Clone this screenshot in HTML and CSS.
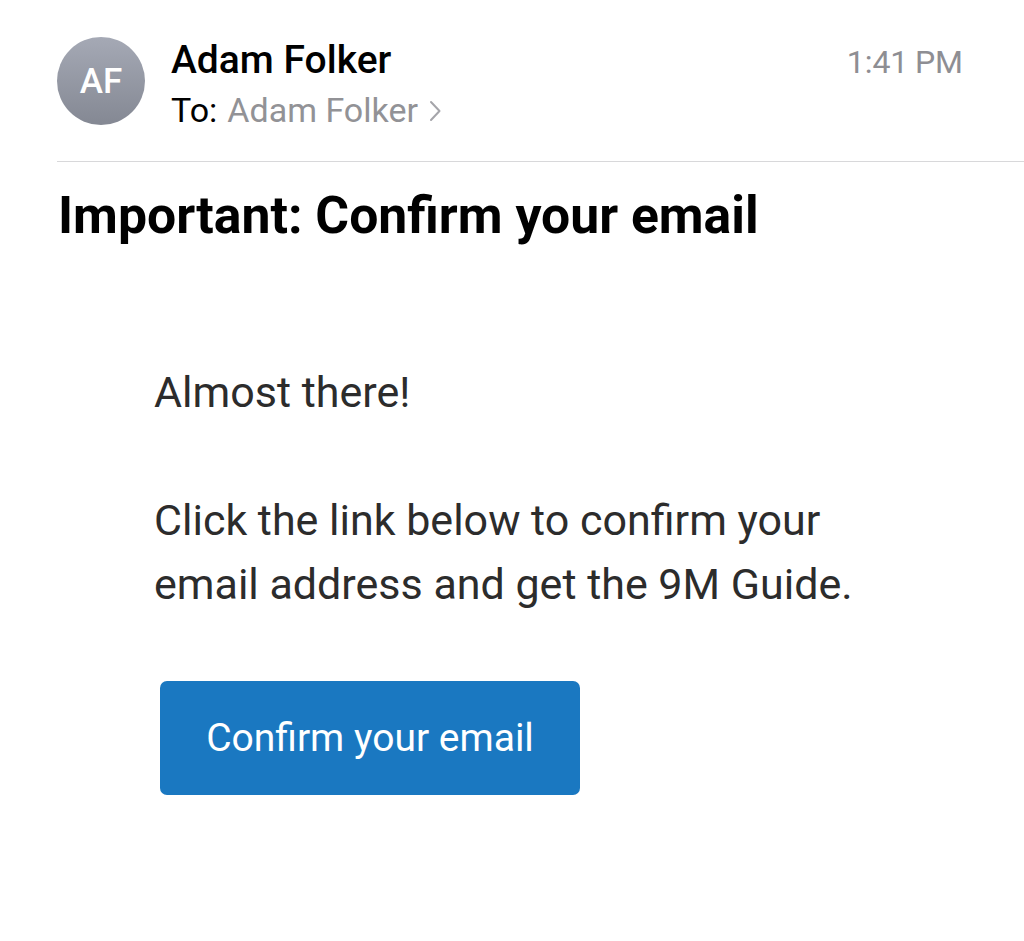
FILE: index.html
```html
<!DOCTYPE html>
<html>
<head>
<meta charset="utf-8">
<link rel="stylesheet" href="styles.css">
</head>
<body>
<div class="mail">
  <header class="header">
    <div class="avatar">AF</div>
    <div class="meta">
      <div class="sender">Adam Folker</div>
      <div class="to"><span class="to-label">To:</span><span class="to-name">Adam Folker</span>
        <svg class="chev" width="14" height="24" viewBox="0 0 14 24"><path d="M3 3 L11.5 12 L3 21" fill="none" stroke="#a5a5aa" stroke-width="2" stroke-linecap="round" stroke-linejoin="round"/></svg>
      </div>
    </div>
    <div class="time">1:41&#8201;PM</div>
  </header>
  <div class="divider"></div>
  <h1 class="subject">Important: Confirm your email</h1>
  <div class="content">
    <p class="lead">Almost there!</p>
    <p class="text">Click the link below to confirm your email address and get the 9M Guide.</p>
    <a class="btn">Confirm your email</a>
  </div>
</div>
</body>
</html>
```
FILE: styles.css
```css
html, body {
  margin: 0;
  padding: 0;
  background: #ffffff;
}
body {
  font-family: Roboto, "Liberation Sans", sans-serif;
  color: #000;
}
.mail {
  width: 1024px;
}
.header {
  display: flex;
  align-items: flex-start;
  padding: 37px 61px 0 57px;
}
.avatar {
  width: 88px;
  height: 88px;
  border-radius: 50%;
  background: linear-gradient(#a5a9b5, #848893);
  color: #fff;
  font-size: 35px;
  font-weight: 500;
  display: flex;
  align-items: center;
  justify-content: center;
  flex: none;
}
.meta {
  margin-left: 26px;
  display: flex;
  flex-direction: column;
}
.sender {
  font-size: 39px;
  font-weight: 500;
  line-height: 44px;
  margin-top: 1px;
  color: #000;
}
.to {
  font-size: 34px;
  line-height: 44px;
  margin-top: 6px;
  color: #000;
  display: flex;
  align-items: center;
}
.to-label { margin-right: 10px; }
.to-name { color: #929296; }
.chev { margin-left: 10px; margin-top: 2px; }
.time {
  margin-left: auto;
  font-size: 32px;
  color: #8e8e93;
  line-height: 40px;
  margin-top: 5px;
}
.divider {
  margin: 29px 0 0 57px;
  height: 1px;
  background: #d8d8da;
}
.subject {
  margin: 24px 0 0 58px;
  font-size: 51.7px;
  font-weight: 700;
  line-height: 60px;
}
.content {
  padding-left: 154px;
  padding-top: 120px;
  color: #2c2c2c;
}
.lead {
  margin: 0;
  font-size: 43px;
  line-height: 52px;
}
.text {
  margin: 70px 0 0 0;
  font-size: 43px;
  line-height: 64px;
  width: 720px;
}
.btn {
  display: flex;
  align-items: center;
  justify-content: center;
  margin: 65px 0 0 6px;
  width: 420px;
  height: 114px;
  background: #1a78c1;
  border-radius: 7px;
  color: #fff;
  font-size: 39px;
}
```
